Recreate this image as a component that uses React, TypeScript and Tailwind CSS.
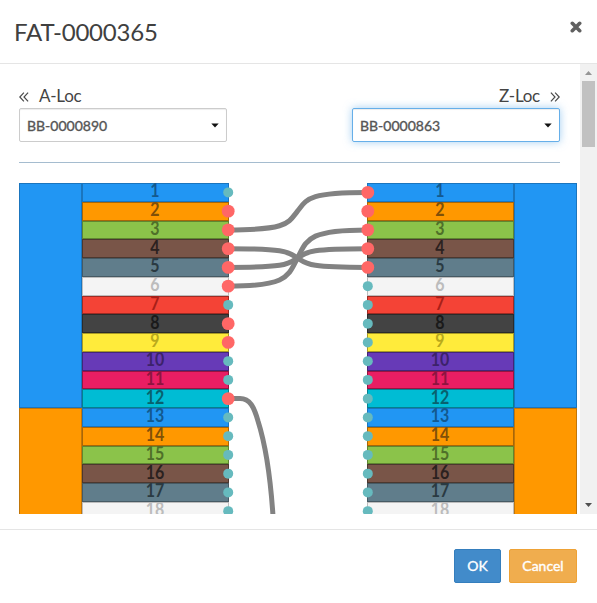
import React from 'react';

type Fiber = { fill: string; edge: string; ink: string };

const palette: Fiber[] = [
  { fill: '#2196f3', edge: '#1a75be', ink: '#13598f' },
  { fill: '#ff9800', edge: '#a86607', ink: '#805008' },
  { fill: '#8bc34a', edge: '#5f8731', ink: '#4f7029' },
  { fill: '#795548', edge: '#4c382f', ink: '#2b211f' },
  { fill: '#607d8b', edge: '#465a64', ink: '#2a3a42' },
  { fill: '#f4f4f4', edge: '#bdbdbd', ink: '#bcbcbc' },
  { fill: '#f44336', edge: '#9f2b23', ink: '#a81f18' },
  { fill: '#434343', edge: '#2b2b2b', ink: '#1a1a1a' },
  { fill: '#ffeb3b', edge: '#a89a25', ink: '#b9a91c' },
  { fill: '#673ab7', edge: '#432678', ink: '#3c226b' },
  { fill: '#e91e63', edge: '#961440', ink: '#8f1440' },
  { fill: '#00bcd4', edge: '#04808f', ink: '#08626e' },
];

const fibers = Array.from({ length: 18 }, (_, i) => i);
const PITCH = 18.75;
const rowY = (i: number) => 9.4 + i * PITCH;

const leftUsed = [1, 2, 3, 4, 5, 7, 8, 11];
const rightUsed = [0, 1, 2, 3, 4];
const links: [number, number][] = [[2, 0], [3, 4], [4, 3], [5, 2]];

function linkPath(from: number, to: number) {
  const y = rowY(from);
  const h = rowY(to) - y;
  const p = (x: number, t: number) => `${209 + x} ${y + h * t}`;
  return `M${p(0, 0)}C${p(60, 0)} ${p(60, 0.18)} ${p(69.5, 0.5)}C${p(79, 0.82)} ${p(79, 1)} ${p(139, 1)}`;
}

function Tubes() {
  return (
    <div className="w-[63px] shrink-0">
      <div className="h-[225px] border border-[#1a75be] bg-[#2196f3]" />
      <div className="h-[225px] border border-[#c27608] bg-[#ff9800]" />
    </div>
  );
}

function Fibers() {
  return (
    <div className="w-[147px] shrink-0">
      {fibers.map((i) => {
        const c = palette[i % 12];
        return (
          <div
            key={i}
            className="flex h-[18.75px] items-center justify-center border pr-px pb-[4px] text-[16px] leading-[12px] font-bold"
            style={{ backgroundColor: c.fill, borderColor: c.edge, color: c.ink }}
          >
            <span className="scale-y-[1.16]">{i + 1}</span>
          </div>
        );
      })}
    </div>
  );
}

function Ports({ x, used }: { x: number; used: number[] }) {
  return (
    <>
      {fibers.map((i) => (
        <circle key={i} cx={x} cy={rowY(i)} r={used.includes(i) ? 6.4 : 5} fill={used.includes(i) ? '#ff6766' : '#66babe'} />
      ))}
    </>
  );
}

function Chevrons({ flip = false }: { flip?: boolean }) {
  return (
    <svg width="10" height="10" viewBox="0 0 10 10" className={flip ? 'rotate-180' : ''} fill="none" stroke="#4a4a4a" strokeWidth="1.2">
      <path d="M4.9 0.7L0.8 5L4.9 9.3M9.1 0.7L5 5L9.1 9.3" />
    </svg>
  );
}

function Select({ value, focused = false }: { value: string; focused?: boolean }) {
  return (
    <div
      className={`flex h-[34px] w-[208px] items-center justify-between rounded-[2px] border bg-white pr-[7px] pl-[7px] text-[14px] text-[#555] ${
        focused ? 'border-[#66afe9] shadow-[inset_0_1px_1px_rgba(0,0,0,0.075),0_0_8px_rgba(102,175,233,0.6)]' : 'border-[#ccc] shadow-[inset_0_1px_1px_rgba(0,0,0,0.075)]'
      }`}
    >
      <span className="pt-px [-webkit-text-stroke:0.35px_#555]">{value}</span>
      <svg width="8" height="5" viewBox="0 0 8 5">
        <path d="M0.3 0.5H7.7L4 4.6Z" fill="#111" />
      </svg>
    </div>
  );
}

export default function App() {
  return (
    <div className="flex h-[603px] w-[597px] flex-col overflow-hidden bg-white font-['Lato',sans-serif] text-[#444]">
      <header className="flex h-16 shrink-0 justify-between border-b border-[#e5e5e5] pr-[15.5px] pl-[14px]">
        <h1 className="pt-[15px] text-[24px] leading-[34px] tracking-[-0.18px] text-[#404040]">FAT-0000365</h1>
        <svg width="12" height="12" viewBox="0 0 12 12" className="mt-[21px]" stroke="#606060" strokeWidth="3.6" strokeLinecap="round">
          <path d="M2.3 2.3L9.7 9.7M9.7 2.3L2.3 9.7" />
        </svg>
      </header>

      <main className="flex h-[450px] shrink-0 overflow-hidden">
        <div className="w-[580px] shrink-0 pt-[22px] pl-[19px]">
          <div className="flex h-[77px] w-[541px] justify-between border-b border-[#a5bccf]">
            <div>
              <div className="flex h-[22px] items-center gap-[10px] text-[17px] leading-[22px] tracking-[-0.25px]">
                <Chevrons />
                <span className="pb-[2px]">A-Loc</span>
              </div>
              <Select value="BB-0000890" />
            </div>
            <div>
              <div className="flex h-[22px] items-center justify-end gap-[10px] text-[17px] leading-[22px] tracking-[-0.25px]">
                <span className="pb-[2px]">Z-Loc</span>
                <Chevrons flip />
              </div>
              <Select value="BB-0000863" focused />
            </div>
          </div>

          <div className="relative mt-5 flex h-[331px] w-[558px] justify-between overflow-hidden">
            <div className="flex">
              <Tubes />
              <Fibers />
            </div>
            <div className="flex">
              <Fibers />
              <Tubes />
            </div>
            <svg className="absolute inset-0" width="558" height="331" viewBox="0 0 558 331">
              <g fill="none" stroke="#828282" strokeWidth="5">
                {links.map(([a, b]) => (
                  <path key={a} d={linkPath(a, b)} />
                ))}
                <path d="M209 215.5H221C231 215.5 235 224 239 238C245 257 251 287 254 333" />
              </g>
              <Ports x={209.2} used={leftUsed} />
              <Ports x={348.8} used={rightUsed} />
            </svg>
          </div>
        </div>

        <div className="flex w-[17px] flex-col items-center bg-[#f1f1f1]">
          <svg width="17" height="17" viewBox="0 0 17 17">
            <path d="M5 11H12L8.5 7Z" fill="#959595" />
          </svg>
          <div className="h-[66px] w-[13px] bg-[#c1c1c1]" />
          <svg width="17" height="17" viewBox="0 0 17 17" className="mt-auto">
            <path d="M5 6H12L8.5 10Z" fill="#505050" />
          </svg>
        </div>
      </main>

      <footer className="mt-[15px] flex grow items-start justify-end gap-2 border-t border-[#e5e5e5] pt-[19px] pr-5 text-[14px] text-white">
        <button className="h-[34px] w-[47px] rounded-[2px] border border-[#357ebd] bg-[#428bca] pb-px [-webkit-text-stroke:0.35px_#fff]">OK</button>
        <button className="h-[34px] w-[68px] rounded-[2px] border border-[#eea236] bg-[#f0ad4e] pb-px [-webkit-text-stroke:0.35px_#fff]">Cancel</button>
      </footer>
    </div>
  );
}
